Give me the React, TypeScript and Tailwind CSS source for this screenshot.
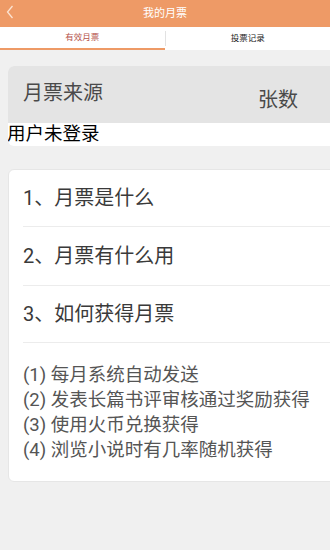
import React from "react";

export default function App() {
  const font = { fontFamily: 'Roboto, "Noto Sans CJK SC", sans-serif' };
  return (
    <div className="w-[330px] h-[550px] bg-[#f0f0f0] overflow-hidden" style={font}>
      {/* Header */}
      <div className="relative h-[27px] bg-[#ee9a66] flex items-center justify-center">
        <svg className="absolute left-[6px] top-[5px]" width="8" height="14" viewBox="0 0 8 14">
          <path d="M6.5 1 L1.5 7 L6.5 13" fill="none" stroke="#fbe3d3" strokeWidth="1.3" />
        </svg>
        <span className="text-[11px] leading-none text-white">我的月票</span>
      </div>
      {/* Tabs */}
      <div className="flex h-[23px] bg-white">
        <div className="flex-1 flex items-center justify-center border-b-2 border-[#ee9a66] relative">
          <span className="text-[8.5px] leading-none text-[#b5524a]">有效月票</span>
        </div>
        <div className="w-px my-[4px] bg-[#e2e2e2]" />
        <div className="flex-1 flex items-center justify-center">
          <span className="text-[8.5px] leading-none text-[#222]">投票记录</span>
        </div>
      </div>
      {/* Card 1 */}
      <div className="mt-[16px] ml-[8px] -mr-[12px] rounded-[6px] overflow-hidden bg-white">
        <div className="h-[57px] bg-[#e4e4e4] flex">
          <span className="pl-[15px] pt-[17px] text-[20px] leading-none text-[#4a4a4a]">月票来源</span>
          <span className="ml-[155px] pt-[24px] text-[20px] leading-none text-[#4a4a4a]">张数</span>
        </div>
        <div className="h-[23px] flex items-center">
          <span className="-ml-[1px] text-[18.5px] leading-none text-black">用户未登录</span>
        </div>
      </div>
      {/* Card 2 */}
      <div className="mt-[23px] ml-[8px] -mr-[12px] rounded-[6px] bg-white border border-[#e6e6e6]">
        <div className="ml-[14px] h-[57px] flex items-center border-b border-[#ececec] text-[20px] text-[#3a3a3a]">
          1、月票是什么
        </div>
        <div className="ml-[14px] h-[59px] flex items-center border-b border-[#ececec] text-[20px] text-[#3a3a3a]">
          2、月票有什么用
        </div>
        <div className="ml-[14px] h-[57px] flex items-center border-b border-[#ececec] text-[20px] text-[#3a3a3a]">
          3、如何获得月票
        </div>
        <div className="pl-[14px] pt-[20px] pb-[18px] text-[18.5px] leading-[25px] text-[#555]">
          <div>(1) 每月系统自动发送</div>
          <div>(2) 发表长篇书评审核通过奖励获得</div>
          <div>(3) 使用火币兑换获得</div>
          <div>(4) 浏览小说时有几率随机获得</div>
        </div>
      </div>
    </div>
  );
}
